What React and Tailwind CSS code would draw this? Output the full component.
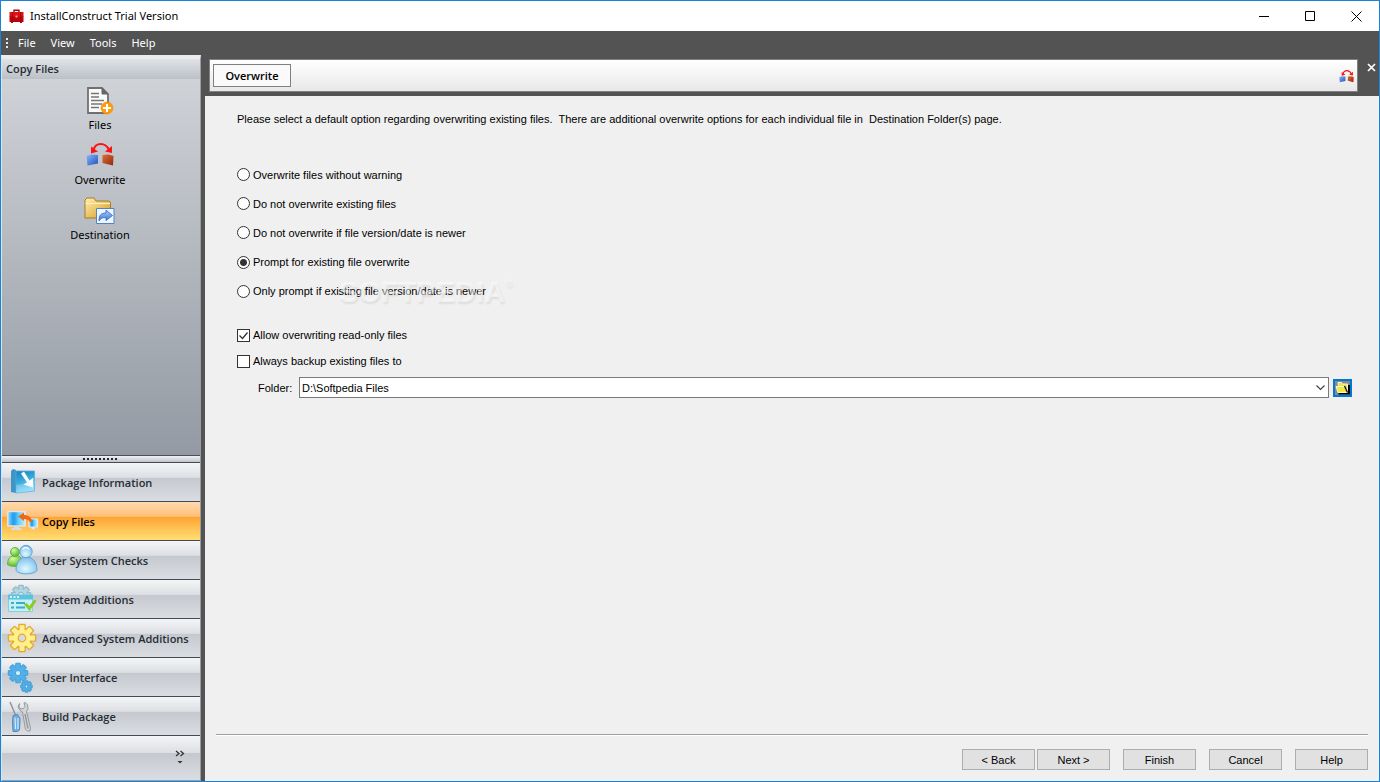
import React, { useState } from "react";

const GEAR_TEETH = [0, 45, 90, 135, 180, 225, 270, 315];

function Gear({ cx, cy, r, fill, stroke, hole }) {
  return (
    <g transform={`translate(${cx} ${cy})`}>
      <g fill={fill} stroke={stroke} strokeWidth="1.6">
        {GEAR_TEETH.map((a) => (
          <rect key={a} x={-r * 0.22} y={-r} width={r * 0.44} height={r * 0.5} rx="0.5" transform={`rotate(${a})`} />
        ))}
        <circle r={r * 0.7} />
      </g>
      <g fill={fill}>
        {GEAR_TEETH.map((a) => (
          <rect key={a} x={-r * 0.18} y={-r * 0.94} width={r * 0.36} height={r * 0.5} transform={`rotate(${a})`} />
        ))}
      </g>
      <circle r={r * 0.28} fill={hole} stroke={stroke} strokeWidth="1.2" />
    </g>
  );
}

function ToolboxIcon() {
  return (
    <svg width="15" height="15" viewBox="0 0 15 15" aria-hidden="true">
      <path d="M5 3V1.200h5V3" fill="none" stroke="#b0000a" strokeWidth="1.400" />
      <path d="M0.500 3h14v4.500h-14z" fill="#dc1018" />
      <path d="M0.500 7.500h14V13h-1.500v1h-2v-1H4v1H2v-1H.5z" fill="#c00008" />
      <path d="M0.500 7.400h14M3.500 3v10M11.500 3v10" stroke="#960006" strokeWidth="0.700" />
      <path d="M6.500 6.500h2v2h-2z" fill="#ff9a90" />
    </svg>
  );
}

function FilesIcon() {
  return (
    <svg width="28" height="28" viewBox="0 0 28 28" aria-hidden="true">
      <path d="M2 1h14l6 6v19H2z" fill="#fafafa" stroke="#707070" strokeWidth="1.800" />
      <path d="M16 1v6h6z" fill="#666" stroke="#666" />
      <path d="M5 6.500h8M5 10h8M5 13.500h13M5 17h11M5 20.500h8" stroke="#777" strokeWidth="1.700" />
      <circle cx="21" cy="21" r="6" fill="#ff9c0c" stroke="#f28a00" strokeWidth="0.600" />
      <path d="M21 17v8M17 21h8" stroke="#fff" strokeWidth="2" />
    </svg>
  );
}

function OverwriteIcon({ className }) {
  return (
    <svg className={className} viewBox="0 0 28 24" aria-hidden="true">
      <defs>
        <linearGradient id="owBlue" x1="0" y1="0" x2="1" y2="1">
          <stop offset="0" stopColor="#86b8ff" />
          <stop offset="1" stopColor="#2450b8" />
        </linearGradient>
        <linearGradient id="owRed" x1="0" y1="0" x2="1" y2="1">
          <stop offset="0" stopColor="#e56a38" />
          <stop offset="1" stopColor="#8c2a08" />
        </linearGradient>
      </defs>
      <path d="M0.500 14l5-1.500 6.500.5v8.500L1.500 23.500z" fill="url(#owBlue)" />
      <path d="M16.500 13l6-.5 5 1.500-.5 9.500-10.500-2.500z" fill="url(#owRed)" />
      <path d="M7.500 8C9.500 0 19.500 0 23 8" fill="none" stroke="#fa1418" strokeWidth="2" />
      <path d="M5 4.500v7l7-2zM26 4v7l-7-1.500z" fill="#fa1418" />
    </svg>
  );
}

function DestinationIcon() {
  return (
    <svg width="31" height="28" viewBox="0 0 31 28" aria-hidden="true">
      <defs>
        <linearGradient id="dFolder" x1="0" y1="0" x2="1" y2="1">
          <stop offset="0" stopColor="#fff0b0" />
          <stop offset="1" stopColor="#d69a22" />
        </linearGradient>
        <linearGradient id="dArrow" x1="0" y1="0" x2="0" y2="1">
          <stop offset="0" stopColor="#a8d0ff" />
          <stop offset="1" stopColor="#3b75d8" />
        </linearGradient>
      </defs>
      <path d="M1 21V3l2-2h7l2 3h13l1.500 1.500V21z" fill="url(#dFolder)" stroke="#a87a24" />
      <path d="M1.500 6.500H26" stroke="#fff2c0" />
      <path d="M12.500 11.500h17.500v15H12.500z" fill="#eef5ff" stroke="#5483bd" />
      <path d="M15 24c0-6 2-8 7-8v-3l6.500 5.500-6.500 5v-3c-4 0-5.500 1-7 3.500z" fill="url(#dArrow)" stroke="#3267bb" strokeWidth="0.800" />
    </svg>
  );
}

function PackageIcon() {
  return (
    <svg width="32" height="32" viewBox="0 0 32 32" aria-hidden="true">
      <defs>
        <linearGradient id="pkg" x1="0" y1="0" x2="0.300" y2="1">
          <stop offset="0" stopColor="#1c7fbd" />
          <stop offset="0.500" stopColor="#3aa9dc" />
          <stop offset="1" stopColor="#8fdcf8" />
        </linearGradient>
      </defs>
      <path d="M4 5l2-2 3 1v23l-5-1z" fill="#3e95c6" />
      <path d="M9 5h18.500v20L9 27z" fill="url(#pkg)" stroke="#54acd6" strokeWidth="0.800" />
      <path d="M9 19c8 0 13-3 18.500-8v14L9 27z" fill="#b4ecff" opacity="0.300" />
      <path d="M14 7.500l3-2 5.500 9 3.500-2.500v9.500l-9.500-3 3.500-2z" fill="#f6fcff" />
    </svg>
  );
}

function CopyIcon() {
  return (
    <svg width="32" height="32" viewBox="0 0 32 32" aria-hidden="true">
      <defs>
        <linearGradient id="screen" x1="0" y1="0" x2="1" y2="0">
          <stop offset="0" stopColor="#9bdcfc" />
          <stop offset="0.280" stopColor="#2ba2ee" />
          <stop offset="0.400" stopColor="#2ba2ee" />
          <stop offset="0.600" stopColor="#5fd0fb" />
          <stop offset="1" stopColor="#c3effe" />
        </linearGradient>
      </defs>
      <path d="M0.700 6.500h17.600v14.500H.7z" fill="url(#screen)" stroke="#e4e4e4" strokeWidth="1.300" />
      <path d="M7 21h5v2h2.500v2h-10v-2H7z" fill="#d9dce2" />
      <path d="M22 14h8.500v8H22z" fill="url(#screen)" stroke="#e4e9ee" strokeWidth="1.200" />
      <path d="M24.500 22h3.500v2.500h-3.500z" fill="#e0e3e8" />
      <path d="M11 11.500l6-4v2.500c4 0 7 2 8.500 6.500l-2.500 1c-1-2.500-3-3.500-6-3.500V16z" fill="#f2661c" />
    </svg>
  );
}

function UsersIcon() {
  return (
    <svg width="32" height="32" viewBox="0 0 32 32" aria-hidden="true">
      <defs>
        <radialGradient id="uGreen" cx="0.350" cy="0.300" r="0.750">
          <stop offset="0" stopColor="#d6ff99" />
          <stop offset="1" stopColor="#4fb32a" />
        </radialGradient>
        <radialGradient id="uBlue" cx="0.450" cy="0.700" r="0.700">
          <stop offset="0" stopColor="#dcfaff" />
          <stop offset="1" stopColor="#7dbdec" />
        </radialGradient>
      </defs>
      <g fill="url(#uGreen)" stroke="#5aa53c" strokeWidth="0.800">
        <path d="M.5 20.500c0-6 3-9 8-9s7 3 7 9c-3 2.500-12 2.500-15 0z" />
        <circle cx="8" cy="8" r="4.500" />
      </g>
      <g fill="url(#uBlue)" stroke="#5e9fce" strokeWidth="0.900">
        <path d="M9 26.500c0-8 4-13.500 10.500-13.500S30 18.500 30 26.500c-3 4.500-18 4.500-21 0z" />
        <circle cx="19" cy="7.500" r="6.200" />
      </g>
      <path d="M15.500 5.500c1.500-2.500 5-2.500 6.500 0" fill="none" stroke="#fff" strokeWidth="1.300" />
    </svg>
  );
}

function AdditionsIcon() {
  return (
    <svg width="32" height="32" viewBox="0 0 32 32" aria-hidden="true">
      <Gear cx={14} cy={12} r={9.5} fill="#b5d6e0" stroke="#8fbccb" hole="#e5f4f8" />
      <path d="M1.500 13h24v15.500h-24z" fill="#c3f1f7" stroke="#86d0de" />
      <path d="M1 11.500h25v5H1z" fill="#5cc2de" />
      <path d="M3 14h2M6.500 14h2M10 14h2" stroke="#fff" strokeWidth="1.500" />
      <path d="M4 20h3M9 20h9M4 24.500h3M9 24.500h9" stroke="#3cacc8" strokeWidth="2" />
      <path d="M17.500 21.500l2-1 3 3 5-6.500 1.500 1-6.500 9.500z" fill="#8fd412" stroke="#76b80c" strokeWidth="0.600" />
    </svg>
  );
}

function YellowGearIcon() {
  return (
    <svg width="32" height="32" viewBox="0 0 32 32" aria-hidden="true">
      <Gear cx={15} cy={16} r={13.5} fill="#fff08c" stroke="#e6a82f" hole="#d7dade" />
    </svg>
  );
}

function BlueGearsIcon() {
  return (
    <svg width="32" height="32" viewBox="0 0 32 32" aria-hidden="true">
      <Gear cx={11} cy={12} r={9.5} fill="#55b0e8" stroke="#4aa5de" hole="#d8edf8" />
      <Gear cx={19.5} cy={25.5} r={5.5} fill="#55b0e8" stroke="#459fd8" hole="#d8edf8" />
    </svg>
  );
}

function ToolsIcon() {
  return (
    <svg width="32" height="32" viewBox="0 0 32 32" aria-hidden="true">
      <path d="M3 2l5.500 13" stroke="#8d9196" strokeWidth="1.400" />
      <path d="M6 15.500l4.500-1 2.500 4-.5 11.500-2 1.500H6l-.5-8z" fill="#70afe3" stroke="#4782b4" strokeWidth="0.900" />
      <path d="M8 17.500l.5 11.500M11 18v11" stroke="#d4ebfc" strokeWidth="1.200" />
      <path d="M12.500 3.500l-1.500 3.500 2 3.500 2.500 1.500 3 17.500 2 1.500h2.500l.5-3-4-16.500 1.500-2.500-.5-4.500-2.500-2-1 .5 1 3.500-1.500 2-3 .5-1.500-2.500z" fill="#d2d4d7" stroke="#8f9397" strokeWidth="0.900" />
      <path d="M18 14l3 14.500" stroke="#94989c" strokeWidth="1.400" />
    </svg>
  );
}

function BrowseIcon() {
  return (
    <svg className="shrink-0" width="15" height="14" viewBox="0 0 15 14" aria-hidden="true">
      <path d="M3.500 12.500h10.500V4" fill="none" stroke="#000" strokeWidth="2" />
      <path d="M3 1.500h3.500l1 1.500h5v8H4z" fill="#ece64a" stroke="#f5f5e0" />
      <path d="M1 5.500h8.500l3 6H3z" fill="#f0ea38" stroke="#f8f8e8" />
      <path d="M9.500 5l3 6.500" stroke="#111" fill="none" strokeWidth="1.300" />
    </svg>
  );
}

const TASKS = [
  { label: "Files", icon: <FilesIcon /> },
  { label: "Overwrite", icon: <OverwriteIcon className="h-6 w-7" /> },
  { label: "Destination", icon: <DestinationIcon /> },
];

const SECTIONS = [
  { label: "Package Information", Icon: PackageIcon },
  { label: "Copy Files", Icon: CopyIcon },
  { label: "User System Checks", Icon: UsersIcon },
  { label: "System Additions", Icon: AdditionsIcon },
  { label: "Advanced System Additions", Icon: YellowGearIcon },
  { label: "User Interface", Icon: BlueGearsIcon },
  { label: "Build Package", Icon: ToolsIcon },
];

const OPTIONS = [
  "Overwrite files without warning",
  "Do not overwrite existing files",
  "Do not overwrite if file version/date is newer",
  "Prompt for existing file overwrite",
  "Only prompt if existing file version/date is newer",
];

const STEEL = "bg-[linear-gradient(#f4f5f7_0%,#dcdfe3_38%,#c5c9cf_39%,#dadde1_100%)]";
const AMBER = "bg-[linear-gradient(#ffd9ae_0%,#ffc078_38%,#ffa333_39%,#ffdf73_100%)]";

function TitleBar() {
  return (
    <header className="flex h-[30px] shrink-0 items-center justify-between bg-white pl-2">
      <div className="flex items-center gap-[6px]">
        <ToolboxIcon />
        <h1 className="text-[11px] text-black">InstallConstruct Trial Version</h1>
      </div>
      <div className="flex h-full">
        <button aria-label="Minimize" className="flex w-[46px] items-center justify-center">
          <svg width="11" height="11" viewBox="0 0 11 11"><path d="M0 5.500h10" stroke="#000" /></svg>
        </button>
        <button aria-label="Maximize" className="flex w-[46px] items-center justify-center">
          <svg width="11" height="11" viewBox="0 0 11 11"><path d="M.5.500h9v9h-9z" fill="none" stroke="#000" /></svg>
        </button>
        <button aria-label="Close" className="flex w-[46px] items-center justify-center">
          <svg width="11" height="11" viewBox="0 0 11 11"><path d="M.5.500l10 10M10.500.500l-10 10" stroke="#000" /></svg>
        </button>
      </div>
    </header>
  );
}

function MenuBar() {
  return (
    <nav className="flex h-6 shrink-0 items-center bg-[#535353] pl-1 text-[11px] text-white">
      <svg width="4" height="12" viewBox="0 0 4 12" aria-hidden="true">
        <path d="M1 1h2v2H1zM1 5h2v2H1zM1 9h2v2H1z" fill="#e8e8e8" />
      </svg>
      <div className="flex gap-[15px] pl-[9px]">
        {["File", "View", "Tools", "Help"].map((m) => (
          <button key={m}>{m}</button>
        ))}
      </div>
    </nav>
  );
}

function Sidebar() {
  const [active, setActive] = useState("Copy Files");
  return (
    <aside className="flex w-[200px] shrink-0 flex-col border-t-4 border-r border-l border-t-[#ececec] border-r-[#9a9da2] border-l-[#dfe2e6]">
      <h2 className="flex h-5 shrink-0 items-center bg-[linear-gradient(#dfe2e6,#bcc1c7)] pl-1 font-['Open_Sans',sans-serif] text-[11px] font-semibold text-[#272c33]">
        Copy Files
      </h2>
      <div className="flex flex-1 flex-col items-center gap-2 bg-[linear-gradient(#cfd2d7,#939aa3)] pt-2 pr-[2px]">
        {TASKS.map((t) => (
          <button key={t.label} className="flex h-[47px] flex-col items-center text-[11px] leading-4 text-black">
            <span className="flex h-[30px] items-start justify-center">{t.icon}</span>
            {t.label}
          </button>
        ))}
      </div>
      <div className="flex h-[7px] shrink-0 items-center justify-center border-t border-[#4c5058] bg-[linear-gradient(#f0f1f3,#c0c4ca)]">
        <svg width="36" height="2" viewBox="0 0 36 2" aria-hidden="true">
          <path d="M0 1h36" stroke="#22283a" strokeWidth="2" strokeDasharray="2 2" />
        </svg>
      </div>
      <nav className="flex shrink-0 flex-col">
        {SECTIONS.map(({ label, Icon }) => (
          <button
            key={label}
            onClick={() => setActive(label)}
            className={`flex h-[39px] items-center gap-[3px] border-t border-[#444a55] pl-[5px] text-left font-['Open_Sans',sans-serif] text-[11px] font-semibold whitespace-nowrap ${
              active === label ? `text-black ${AMBER}` : `text-[#272c33] ${STEEL}`
            }`}
          >
            <Icon />
            <span className="pt-[2px]">{label}</span>
          </button>
        ))}
      </nav>
      <div className={`flex h-[46px] shrink-0 items-start justify-end border-t border-b border-t-[#444a55] border-b-[#9a9da2] pt-[14px] pr-[15px] ${STEEL}`}>
        <button aria-label="Configure buttons">
          <svg width="10" height="16" viewBox="0 0 10 16">
            <path d="M1 1l3 2.500L1 6M5.500 1l3 2.500-3 2.500" fill="none" stroke="#333" strokeWidth="1.300" />
            <path d="M2.500 11h5L5 13.500z" fill="#333" />
          </svg>
        </button>
      </div>
    </aside>
  );
}

function PageHeader() {
  return (
    <div className="flex h-[41px] shrink-0 items-start bg-[#535353] pt-1 pl-1">
      <div className="flex h-[33px] flex-1 items-center justify-between border border-[#808080] bg-[linear-gradient(#ffffff,#e8e8e8)] pr-[3px] pl-[3px]">
        <button className="h-[23px] w-[78px] border border-[#808080] bg-[#fafafa] pt-px font-['Open_Sans',sans-serif] text-[11px] font-semibold text-black">
          Overwrite
        </button>
        <OverwriteIcon className="h-[14px] w-[15px]" />
      </div>
      <button aria-label="Close page" className="flex h-[17px] w-[21px] items-center justify-center pl-[5px]">
        <svg width="9" height="9" viewBox="0 0 9 9"><path d="M1 1l7 7M8 1l-7 7" stroke="#fff" strokeWidth="1.700" /></svg>
      </button>
    </div>
  );
}

function CheckRow({ id, label, defaultChecked }) {
  return (
    <div className="flex h-[26px] items-center gap-[3px]">
      <span className="grid size-[13px]">
        <input
          id={id}
          type="checkbox"
          defaultChecked={defaultChecked}
          className="peer col-start-1 row-start-1 size-[13px] appearance-none border border-[#333] bg-white"
        />
        <svg className="pointer-events-none invisible col-start-1 row-start-1 peer-checked:visible" width="13" height="13" viewBox="0 0 13 13">
          <path d="M2.500 6.500l3 3 5-6" fill="none" stroke="#333" strokeWidth="1.300" />
        </svg>
      </span>
      <label htmlFor={id}>{label}</label>
    </div>
  );
}

function CommandButton({ children }) {
  return <button className="h-[21px] w-[73px] border border-[#adadad] bg-[#e1e1e1]">{children}</button>;
}

function OverwritePage() {
  return (
    <main className="flex flex-1 flex-col bg-[#f0f0f0] pt-4 pr-[11px] pb-[11px] pl-[11px] font-['Liberation_Sans',Arial,sans-serif] text-[11px] leading-[14px] text-black">
      <div className="flex flex-1 flex-col pr-4 pl-[21px]">
        <p className="whitespace-pre-wrap">
          {"Please select a default option regarding overwriting existing files.  There are additional overwrite options for each individual file in  Destination Folder(s) page."}
        </p>
        <div role="radiogroup" aria-label="Default overwrite option" className="relative mt-[34px] grid h-[146px] grid-rows-5">
          {OPTIONS.map((o, i) => (
            <div key={o} className="flex items-center gap-[3px]">
              <input
                id={`option-${i}`}
                type="radio"
                name="overwrite"
                defaultChecked={i === 3}
                className="size-[13px] appearance-none rounded-full border border-[#333] bg-white checked:bg-[radial-gradient(circle,#333_0_3px,#fff_4px)]"
              />
              <label htmlFor={`option-${i}`}>{o}</label>
            </div>
          ))}
          <div aria-hidden="true" className="pointer-events-none absolute bottom-0 left-[102px] flex font-['Liberation_Sans',Arial,sans-serif] text-[29px] leading-7 font-bold text-white/50 [text-shadow:1px_2px_2px_rgb(0_0_0/0.08)]">
            SOFTPEDIA<span className="text-[10px] leading-3">®</span>
          </div>
        </div>
        <div className="mt-4">
          <CheckRow id="readonly" label="Allow overwriting read-only files" defaultChecked />
          <CheckRow id="backup" label="Always backup existing files to" />
        </div>
        <div className="mt-[3px] flex items-center pl-[21px]">
          <label htmlFor="folder" className="w-[41px]">Folder:</label>
          <div className="grid flex-1 items-center">
            <select id="folder" className="col-start-1 row-start-1 h-[21px] w-full appearance-none border border-[#7a7a7a] bg-white pl-[2px]">
              <option>D:\Softpedia Files</option>
            </select>
            <svg className="pointer-events-none col-start-1 row-start-1 mr-1 justify-self-end" width="9" height="6" viewBox="0 0 9 6" aria-hidden="true">
              <path d="M.5.500l4 4 4-4" fill="none" stroke="#444" strokeWidth="1.200" />
            </svg>
          </div>
          <button aria-label="Browse for folder" className="ml-1 flex h-[18px] w-[19px] items-center justify-center border-2 border-[#0078d7] bg-[#8a8a8a]">
            <BrowseIcon />
          </button>
        </div>
      </div>
      <footer className="flex justify-end border-t border-[#a0a0a0] pt-[14px] shadow-[inset_0_1px_0_#fff]">
        <div className="flex gap-[13px]">
          <div className="flex gap-[2px]">
            <CommandButton>&lt; Back</CommandButton>
            <CommandButton>Next &gt;</CommandButton>
          </div>
          <CommandButton>Finish</CommandButton>
          <CommandButton>Cancel</CommandButton>
          <CommandButton>Help</CommandButton>
        </div>
      </footer>
    </main>
  );
}

export default function App() {
  return (
    <div className="flex min-h-screen flex-col border border-[#1883d7] bg-[#535353] font-['Noto_Sans','Open_Sans',sans-serif]">
      <TitleBar />
      <MenuBar />
      <div className="flex flex-1">
        <Sidebar />
        <div className="ml-1 flex min-w-0 flex-1 flex-col">
          <PageHeader />
          <OverwritePage />
        </div>
      </div>
    </div>
  );
}
